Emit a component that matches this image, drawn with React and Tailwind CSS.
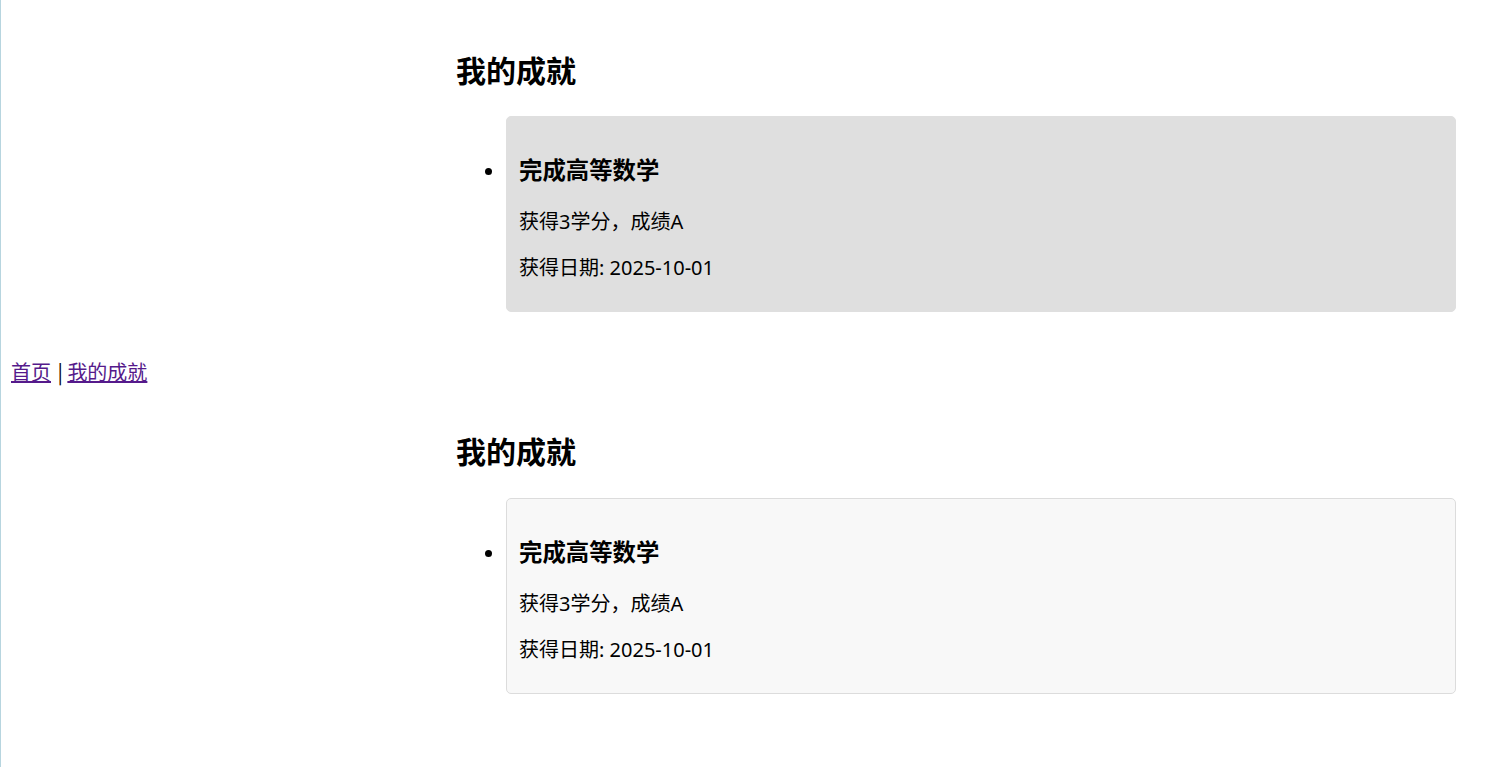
const achievements = [
  { title: "完成高等数学", desc: "获得3学分，成绩A", date: "2025-10-01" },
];

function Section({ variant }) {
  const card =
    variant === "dark"
      ? "border-[#dfdfdf] bg-[#dfdfdf]"
      : "border-[#dcdcdc] bg-[#f8f8f8]";
  return (
    <section className="ml-[445px] mr-[22px]">
      <h2 className="text-[30px] leading-[40px] font-bold">我的成就</h2>
      <ul className={`list-disc pl-[50px] ${variant === "dark" ? "mt-[25px]" : "mt-[26px]"}`}>
        {achievements.map((a) => (
          <li key={a.title} className="text-[20px]">
            <div className={`rounded-[5px] border px-[12px] pt-[38px] pb-[30px] ${card}`}>
              <h3 className="text-[23.4px] leading-[30px] font-bold">{a.title}</h3>
              <p className="mt-[24px] leading-[26px]">{a.desc}</p>
              <p className="mt-[20px] leading-[26px]">获得日期: {a.date}</p>
            </div>
          </li>
        ))}
      </ul>
    </section>
  );
}

export default function App() {
  return (
    <div
      className="min-h-screen border-l border-[#b7d5df] bg-white px-[10px] pt-[51px] text-black"
      style={{ fontFamily: '"Noto Sans", "Noto Sans CJK SC", sans-serif' }}
    >
      <Section variant="dark" />
      <nav
        className="mt-[47px] text-[20px] leading-[26px]"
        style={{ fontFamily: '"Noto Sans CJK SC", sans-serif' }}
      >
        <a href="#" className="text-[#551a8b] underline">首页</a>
        <span className="ml-[2px]"> | </span>
        <a href="#" className="text-[#551a8b] underline">我的成就</a>
      </nav>
      <div className="mt-[47px]">
        <Section variant="light" />
      </div>
    </div>
  );
}
